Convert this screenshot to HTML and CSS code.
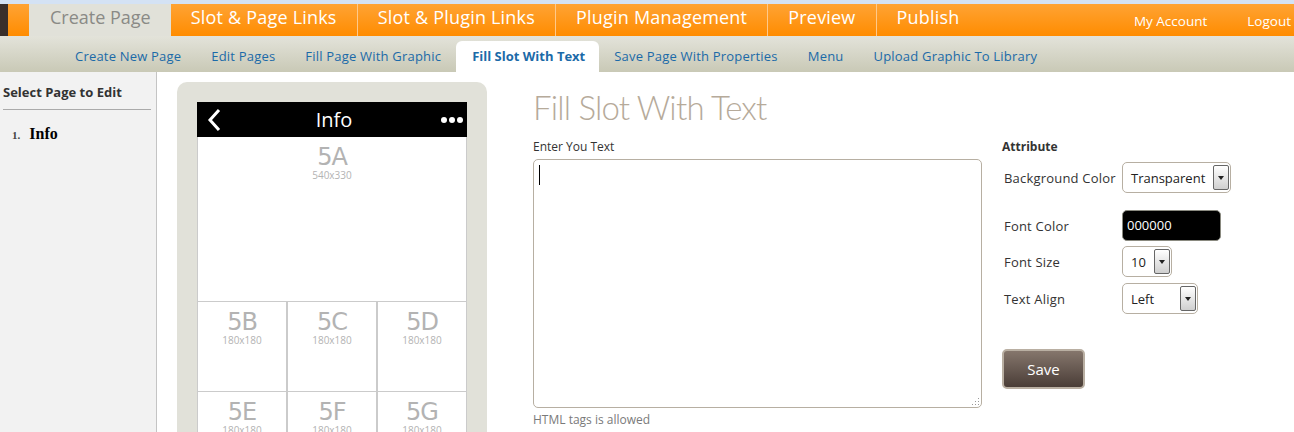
FILE: index.html
```html
<!DOCTYPE html>
<html>
<head>
<meta charset="utf-8">
<title>Fill Slot With Text</title>
<link rel="stylesheet" href="styles.css">
</head>
<body>
<div class="topstrip"></div>
<header class="topnav">
  <div class="brand-dark"></div>
  <div class="brand-orange"></div>
  <nav class="main-tabs">
    <a class="tab active">Create Page</a>
    <a class="tab">Slot &amp; Page Links</a>
    <a class="tab">Slot &amp; Plugin Links</a>
    <a class="tab">Plugin Management</a>
    <a class="tab">Preview</a>
    <a class="tab last">Publish</a>
  </nav>
  <div class="account">
    <a>My Account</a>
    <a>Logout</a>
  </div>
</header>
<nav class="subnav">
  <a>Create New Page</a>
  <a>Edit Pages</a>
  <a>Fill Page With Graphic</a>
  <a class="current">Fill Slot With Text</a>
  <a>Save Page With Properties</a>
  <a>Menu</a>
  <a>Upload Graphic To Library</a>
</nav>
<main class="main">
  <aside class="sidebar">
    <h3>Select Page to Edit</h3>
    <ol>
      <li><span class="num">1.</span> Info</li>
    </ol>
  </aside>
  <section class="phone">
    <div class="phone-head">
      <svg class="back" width="14" height="24" viewBox="0 0 14 24"><path d="M12 2 L3 12 L12 22" fill="none" stroke="#fff" stroke-width="3"/></svg>
      <span class="phone-title">Info</span>
      <span class="dots"><i></i><i></i><i></i></span>
    </div>
    <div class="slots">
      <div class="slot big"><b>5A</b><small>540x330</small></div>
      <div class="slot"><b>5B</b><small>180x180</small></div>
      <div class="slot"><b>5C</b><small>180x180</small></div>
      <div class="slot"><b>5D</b><small>180x180</small></div>
      <div class="slot"><b>5E</b><small>180x180</small></div>
      <div class="slot"><b>5F</b><small>180x180</small></div>
      <div class="slot"><b>5G</b><small>180x180</small></div>
    </div>
  </section>
  <section class="editor">
    <h1>Fill Slot With Text</h1>
    <div class="cols">
      <div class="textcol">
        <label class="lbl">Enter You Text</label>
        <div class="textarea"><span class="caret"></span><span class="grip"></span></div>
        <p class="hint">HTML tags is allowed</p>
      </div>
      <div class="attrcol">
        <h4>Attribute</h4>
        <div class="row r1"><span class="name">Background Color</span><div class="select w-bg"><span>Transparent</span><i class="arrow"></i></div></div>
        <div class="row r2"><span class="name">Font Color</span><div class="color">000000</div></div>
        <div class="row r3"><span class="name">Font Size</span><div class="select w-fs"><span>10</span><i class="arrow"></i></div></div>
        <div class="row r4"><span class="name">Text Align</span><div class="select w-ta"><span>Left</span><i class="arrow"></i></div></div>
        <button class="save">Save</button>
      </div>
    </div>
  </section>
</main>
</body>
</html>
```
FILE: styles.css
```css
* { box-sizing: border-box; }
html, body { margin: 0; padding: 0; }
body {
  width: 1294px;
  height: 432px;
  overflow: hidden;
  background: #fff;
  font-family: "Open Sans", "DejaVu Sans", sans-serif;
  color: #333;
}
a { text-decoration: none; cursor: pointer; }

.topstrip { height: 4px; background: #d4e2f4; }

.topnav {
  display: flex;
  height: 32px;
  background: linear-gradient(#ffa334, #ff8c00);
}
.brand-dark { width: 8px; background: #3a2f2b; }
.brand-orange { width: 21px; }
.main-tabs { display: flex; }
.tab {
  display: block;
  padding: 0 20px 0 20px;
  line-height: 27px;
  font-size: 18px;
  letter-spacing: 0.2px;
  color: #fff;
  border-right: 1px solid #ffc98a;
}
.tab.last { border-right: 0; }
.tab.active {
  background: #e1e1d9;
  color: #8a8a86;
  border-right: 0;
  letter-spacing: 0;
  padding: 0 20px 0 21px;
}
.account {
  margin-left: auto;
  display: flex;
  gap: 40px;
  padding-right: 3px;
}
.account a {
  color: #fff;
  font-size: 13.5px;
  line-height: 34px;
}

.subnav {
  display: flex;
  align-items: flex-end;
  height: 36px;
  padding-left: 60px;
  background: linear-gradient(#e3e3da, #c9c9b6);
}
.subnav a {
  display: block;
  height: 31px;
  line-height: 31px;
  padding: 0 15px;
  font-size: 13px;
  letter-spacing: 0.2px;
  color: #1b6aa8;
}
.subnav a.current {
  background: #fff;
  border-radius: 6px 6px 0 0;
  font-weight: bold;
  letter-spacing: 0;
  padding: 0 14px 0 16px;
}

.main { display: flex; height: 360px; }

.sidebar {
  width: 157px;
  flex: none;
  background: #f2f2f2;
  border-right: 1px solid #c4c4c4;
  padding: 11px 5px 0 3px;
}
.sidebar h3 {
  margin: 0;
  font-size: 13px;
  font-weight: bold;
  color: #333;
  padding-bottom: 8px;
  border-bottom: 1px solid #aaa;
}
.sidebar ol {
  list-style: none;
  margin: 15px 0 0;
  padding: 0 0 0 9px;
  font-family: "Liberation Serif", serif;
  font-weight: bold;
  font-size: 16px;
  color: #000;
}
.sidebar .num { font-size: 11px; color: #444; margin-right: 5px; }

.phone {
  flex: none;
  width: 310px;
  margin: 10px 0 0 20px;
  padding: 20px 20px 0;
  background: #e1e1d9;
  border-radius: 10px 10px 0 0;
  height: 400px;
}
.phone-head {
  height: 35px;
  background: #000;
  display: flex;
  align-items: center;
  justify-content: space-between;
  padding: 0 4px 0 10px;
  color: #fff;
}
.phone-title { font-size: 20px; line-height: 35px; padding-left: 6px; }
.dots { display: flex; gap: 2px; }
.dots i { width: 6px; height: 6px; border-radius: 50%; background: #fff; display: block; }

.slots {
  display: grid;
  grid-template-columns: 90px 90px 90px;
  background: #fff;
}
.slot {
  height: 90px;
  border: 1px solid #cbcbcb;
  border-top: 0;
  display: flex;
  flex-direction: column;
  align-items: center;
  padding-top: 7px;
  color: #b3b3b3;
}
.slot.big { grid-column: 1 / 4; height: 165px; padding-top: 7px; }
.slot b {
  font-family: "DejaVu Sans", sans-serif;
  font-weight: normal;
  font-size: 24px;
  line-height: 26px;
  letter-spacing: -1px;
}
.slot small { font-size: 10px; line-height: 10px; }

.editor { margin-left: 46px; padding-top: 15px; }
.editor h1 {
  margin: 0;
  font-family: "Lato", sans-serif;
  font-weight: 300;
  font-size: 33px;
  line-height: 40px;
  color: #b6aa9a;
  letter-spacing: -0.8px;
}
.cols { display: flex; gap: 20px; margin-top: 12px; }
.textcol { width: 449px; }
.lbl { display: block; font-size: 12px; line-height: 16px; color: #333; }
.textarea {
  margin-top: 4px;
  height: 249px;
  border: 1px solid #b7afa2;
  border-radius: 5px;
  position: relative;
  background: #fff;
}
.caret {
  position: absolute;
  left: 5px; top: 5px;
  width: 1px; height: 20px;
  background: #000;
}
.grip {
  position: absolute;
  right: 2px; bottom: 2px;
  width: 8px; height: 8px;
  background: radial-gradient(circle, #999 0.7px, transparent 1px) 0 0 / 3px 3px;
  clip-path: polygon(100% 0, 100% 100%, 0 100%);
}
.hint { margin: 3px 0 0; font-size: 12px; line-height: 17px; color: #7a7a7a; }

.attrcol { padding-top: 0; }
.attrcol h4 { margin: 0; font-size: 12px; line-height: 16px; font-weight: bold; color: #333; }
.row { display: flex; align-items: center; padding-left: 2px; }
.row .name { width: 118px; font-size: 13px; letter-spacing: 0.2px; color: #333; }
.r1 { margin-top: 7px; }
.r2 { margin-top: 17px; }
.r3 { margin-top: 5px; }
.r4 { margin-top: 6px; }
.select {
  height: 31px;
  border: 1px solid #b7afa2;
  border-radius: 5px;
  background: #fff;
  display: flex;
  align-items: center;
  justify-content: space-between;
  padding: 0 1px 0 8px;
  font-size: 13px;
  color: #222;
}
.w-bg { width: 109px; }
.w-fs { width: 50px; }
.w-ta { width: 76px; }
.arrow {
  width: 16px;
  height: 25px;
  border: 1px solid #666;
  border-radius: 2px;
  background: linear-gradient(#fff, #cfcfcf);
  position: relative;
}
.arrow::after {
  content: "";
  position: absolute;
  left: 4px; top: 10px;
  border-left: 3px solid transparent;
  border-right: 3px solid transparent;
  border-top: 4px solid #222;
}
.color {
  width: 99px;
  height: 31px;
  background: #000;
  border: 1px solid #8a8a80;
  border-radius: 5px;
  color: #fff;
  font-size: 13px;
  line-height: 29px;
  padding-left: 4px;
}
.save {
  display: block;
  margin-top: 35px;
  width: 83px;
  height: 40px;
  border: 2px solid #b9afa2;
  border-radius: 5px;
  background: linear-gradient(#85766c, #4a3d37);
  color: #fff;
  font-family: "Open Sans", sans-serif;
  font-size: 15px;
}
```
